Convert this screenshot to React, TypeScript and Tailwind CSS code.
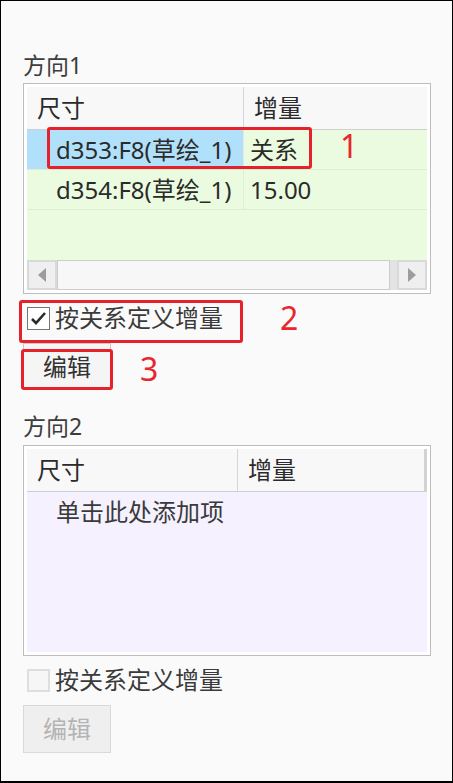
import React from "react";

const font = { fontFamily: '"Noto Sans", "Noto Sans CJK SC", sans-serif' };

function ArrowLeft() {
  return (
    <svg width="8" height="14" viewBox="0 0 8 14">
      <polygon points="8,0 0,7 8,14" fill="#9c9c9c" />
    </svg>
  );
}
function ArrowRight() {
  return (
    <svg width="8" height="14" viewBox="0 0 8 14">
      <polygon points="0,0 8,7 0,14" fill="#9c9c9c" />
    </svg>
  );
}

function Checkbox({ checked }: { checked: boolean }) {
  if (checked) {
    return (
      <div className="ml-[4px] w-[23px] h-[23px] border border-[#757575] bg-white flex items-center justify-center shrink-0">
        <svg width="17" height="15" viewBox="0 0 17 15">
          <polyline points="2,8 6,12 15,2" fill="none" stroke="#2a2a2a" strokeWidth="2.6" />
        </svg>
      </div>
    );
  }
  return <div className="ml-[4px] w-[23px] h-[23px] border-2 border-[#dedede] bg-[#f6f6f6] shrink-0" />;
}

function RedNum({ n, className }: { n: string; className: string }) {
  return (
    <div
      className={"absolute text-[32px] leading-none text-[#e8262e] " + className}
      style={{ fontFamily: '"Noto Sans", sans-serif' }}
    >
      {n}
    </div>
  );
}

export default function App() {
  return (
    <div
      className="w-[453px] h-[783px] border border-black border-b-2 bg-[#fafafa] flex flex-col px-[22px] pt-[49px] text-[24px] text-[#2b2b2b] overflow-hidden"
      style={font}
    >
      <div className="h-[30px] flex items-center text-[#3d3d3d] text-[23px]">方向1</div>

      {/* Table 1 */}
      <div className="relative mt-[3px] w-[408px] h-[211px] border border-[#bdbdbd] bg-white p-[3px]">
        <div className="flex flex-col h-full">
          <div className="h-[43px] shrink-0 flex bg-[#f8f8f8] border-b border-[#cfcfcf]">
            <div className="w-[217px] border-r border-[#d6d6d6] pl-[10px] flex items-center">尺寸</div>
            <div className="flex-1 pl-[10px] flex items-center">增量</div>
          </div>
          <div className="h-[40px] shrink-0 flex bg-[#ebfbdf] border-b border-[#dfeed3]">
            <div className="w-[217px] bg-[#b1e1fa] border-r border-[#e3ebdd] pl-[29px] flex items-center whitespace-nowrap">
              d353:F8(草绘_1)
            </div>
            <div className="flex-1 pl-[6px] flex items-center">关系</div>
          </div>
          <div className="h-[40px] shrink-0 flex bg-[#ebfbdf] border-b border-[#dfeed3]">
            <div className="w-[217px] border-r border-[#dfeed3] pl-[29px] flex items-center whitespace-nowrap">
              d354:F8(草绘_1)
            </div>
            <div className="flex-1 pl-[6px] flex items-center">15.00</div>
          </div>
          <div className="flex-1 bg-[#ebfbdf]" />
          <div className="h-[30px] shrink-0 flex bg-[#d9d9d9]">
            <div className="w-[30px] border-2 border-[#d9d9d9] bg-[#efefef] flex items-center justify-center">
              <ArrowLeft />
            </div>
            <div className="flex-1 flex bg-[#e3e3e3]">
              <div className="flex-1 border border-[#cdcdcd] bg-[#f7f7f7]" />
              <div className="w-[7px]" />
            </div>
            <div className="w-[30px] border-2 border-[#d9d9d9] bg-[#efefef] flex items-center justify-center">
              <ArrowRight />
            </div>
          </div>
        </div>
        <div className="absolute left-[23px] top-[43px] w-[265px] h-[42px] border-[3px] border-[#e5222b] rounded-[3px]" />
        <RedNum n="1" className="left-[316px] top-[46px]" />
      </div>

      {/* Checkbox row 1 */}
      <div className="relative mt-[10px] h-[28px] flex items-center gap-[5px] text-[#3a3a3a]">
        <Checkbox checked />
        <span className="leading-none">按关系定义增量</span>
        <div className="absolute left-[-4px] top-[-4px] w-[224px] h-[43px] border-[3px] border-[#e5222b] rounded-[3px]" />
        <RedNum n="2" className="left-[257px] top-[-2px]" />
      </div>

      {/* Button 1 */}
      <div className="relative mt-[11px] w-[88px] h-[47px] border border-[#c8c8c8] bg-[#f5f5f5] flex items-center justify-center text-[#333]">
        编辑
        <div className="absolute left-[-3px] top-[5px] w-[92px] h-[41px] border-[3px] border-[#e5222b] rounded-[3px]" />
        <RedNum n="3" className="left-[116px] top-[9px]" />
      </div>

      <div className="mt-[21px] h-[30px] flex items-center text-[#3d3d3d] text-[23px]">方向2</div>

      {/* Table 2 */}
      <div className="mt-[4px] w-[408px] h-[211px] border border-[#bdbdbd] bg-white p-[3px]">
        <div className="flex flex-col h-full">
          <div className="h-[43px] shrink-0 flex bg-[#f8f8f8] border-b border-[#cfcfcf]">
            <div className="w-[211px] border-r border-[#d6d6d6] pl-[10px] flex items-center">尺寸</div>
            <div className="flex-1 border-r-[3px] border-[#d3d3d3] pl-[10px] flex items-center">增量</div>
          </div>
          <div className="flex-1 bg-[#f5f1ff]">
            <div className="h-[40px] pl-[29px] flex items-center text-[#3a3a3a]">单击此处添加项</div>
          </div>
        </div>
      </div>

      {/* Checkbox row 2 */}
      <div className="mt-[10px] h-[28px] flex items-center gap-[5px] text-[#3a3a3a]">
        <Checkbox checked={false} />
        <span className="leading-none">按关系定义增量</span>
      </div>

      {/* Button 2 */}
      <div className="mt-[11px] w-[88px] h-[48px] border border-[#d9d9d9] bg-[#efefef] flex items-center justify-center text-[#b4b4b4]">
        编辑
      </div>
    </div>
  );
}
